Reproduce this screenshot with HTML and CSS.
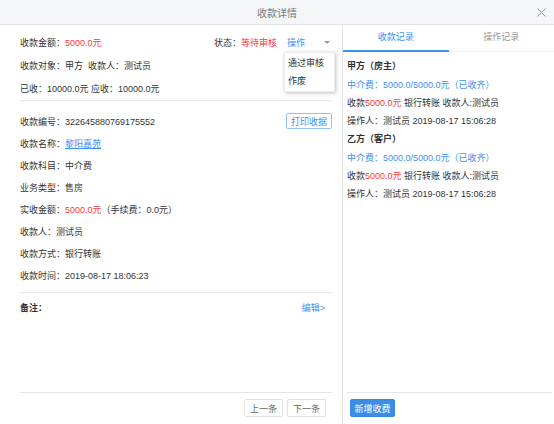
FILE: index.html
```html
<!DOCTYPE html>
<html lang="zh-CN">
<head>
    <meta charset="UTF-8">
    <title>收款详情</title>
    <link rel="stylesheet" href="styles.css">
</head>
<body>
    <div class="dialog">
        <div class="dialog-header">
            <span class="dialog-title">收款详情</span>
            <span class="close">
                <svg width="9" height="9" viewBox="0 0 9 9"><path d="M0.5 0.5L8.5 8.5M8.5 0.5L0.5 8.5" stroke="#999" stroke-width="1" fill="none"/></svg>
            </span>
        </div>
        <div class="dialog-body">
            <div class="main">
                <div class="section summary">
                    <div class="row split">
                        <span>收款金额：<span class="red">5000.0元</span></span>
                        <span class="status">
                            状态：<span class="red">等待审核</span>
                            <span class="op">
                                <span class="blue">操作</span>
                                <span class="caret"></span>
                                <span class="menu">
                                    <span class="menu-item">通过审核</span>
                                    <span class="menu-item">作废</span>
                                </span>
                            </span>
                        </span>
                    </div>
                    <div class="row">收款对象：甲方&nbsp;&nbsp;收款人：测试员</div>
                    <div class="row">已收：10000.0元 应收：10000.0元</div>
                </div>
                <div class="section details">
                    <div class="row split">
                        <span>收款编号：322645880769175552</span>
                        <button class="btn-outline">打印收据</button>
                    </div>
                    <div class="row">收款名称：<a class="link" href="#">黎阳嘉苑</a></div>
                    <div class="row">收款科目：中介费</div>
                    <div class="row">业务类型：售房</div>
                    <div class="row">实收金额：<span class="red">5000.0元</span>（手续费：0.0元）</div>
                    <div class="row">收款人：测试员</div>
                    <div class="row">收款方式：银行转账</div>
                    <div class="row">收款时间：2019-08-17 18:06:23</div>
                </div>
                <div class="remark">
                    <div class="row split">
                        <strong>备注：</strong>
                        <span class="blue">编辑&gt;</span>
                    </div>
                </div>
                <div class="main-footer">
                    <button class="btn">上一条</button>
                    <button class="btn">下一条</button>
                </div>
            </div>
            <div class="side">
                <div class="tabs">
                    <span class="tab active">收款记录</span>
                    <span class="tab">操作记录</span>
                </div>
                <div class="records">
                    <div class="record">
                        <div class="record-title">甲方（房主）</div>
                        <div class="record-fee">中介费：5000.0/5000.0元（已收齐）</div>
                        <div class="record-line">收款<span class="red">5000.0元</span> 银行转账 收款人:测试员</div>
                        <div class="record-line">操作人：测试员 2019-08-17 15:06:28</div>
                    </div>
                    <div class="record">
                        <div class="record-title">乙方（客户）</div>
                        <div class="record-fee">中介费：5000.0/5000.0元（已收齐）</div>
                        <div class="record-line">收款<span class="red">5000.0元</span> 银行转账 收款人:测试员</div>
                        <div class="record-line">操作人：测试员 2019-08-17 15:06:28</div>
                    </div>
                </div>
                <div class="side-footer">
                    <button class="btn-primary">新增收费</button>
                </div>
            </div>
        </div>
    </div>
</body>
</html>
```

FILE: styles.css
```css
body {
    margin: 0;
    font-family: "Liberation Sans", "Noto Sans CJK SC", sans-serif;
    font-size: 9px;
    color: #333;
    background-color: #fff;
}
.dialog {
    width: 554px;
    height: 424px;
    display: flex;
    flex-direction: column;
}
.dialog-header {
    height: 24px;
    border-bottom: 1px solid #e2e3e6;
    background-color: #f4f5f7;
    display: flex;
    align-items: center;
    justify-content: center;
    position: relative;
}
.dialog-title {
    font-size: 10px;
    color: #777;
}
.close {
    position: absolute;
    right: 8px;
    top: 8px;
    width: 9px;
    height: 9px;
}
.close svg {
    display: block;
}
.dialog-body {
    flex: 1;
    display: flex;
    min-height: 0;
}
.main {
    width: 312px;
    padding: 0 10px 0 20px;
    border-right: 1px solid #e4e4e4;
    display: flex;
    flex-direction: column;
}
.section {
    border-bottom: 1px solid #e6e6e6;
}
.summary {
    padding-top: 6px;
}
.summary .row {
    height: 23px;
}
.details {
    padding: 9px 0 6px;
}
.row {
    height: 22px;
    display: flex;
    align-items: center;
    white-space: nowrap;
}
.row.split {
    justify-content: space-between;
}
.red {
    color: #fd3636;
}
.blue {
    color: #3d8ff0;
}
.status {
    display: flex;
    align-items: center;
}
.op {
    position: relative;
    width: 45px;
    margin-left: 10px;
    display: flex;
    align-items: center;
    justify-content: space-between;
}
.caret {
    width: 0;
    height: 0;
    margin-right: 2px;
    border-left: 3px solid transparent;
    border-right: 3px solid transparent;
    border-top: 3px solid #999;
}
.menu {
    position: absolute;
    left: -3px;
    top: 16px;
    width: 49px;
    padding: 1px 0;
    background-color: #fff;
    border: 1px solid #ececec;
    box-shadow: 1px 1px 4px rgba(0,0,0,0.25);
    z-index: 2;
}
.menu-item {
    display: block;
    line-height: 18px;
    padding-left: 3px;
    color: #333;
}
.btn-outline {
    height: 16px;
    padding: 0 4px;
    font-family: inherit;
    font-size: 9px;
    color: #3d8ff0;
    background-color: #fff;
    border: 1px solid #91c2f5;
    border-radius: 2px;
}
.link {
    color: #3d8ff0;
    text-decoration: underline;
}
.remark {
    flex: 1;
    padding: 3px 7px 0 0;
}
.remark strong {
    font-weight: bold;
    color: #333;
}
.main-footer {
    height: 32px;
    border-top: 1px solid #e6e6e6;
    display: flex;
    justify-content: flex-end;
    align-items: flex-start;
    gap: 4px;
    padding: 6px 6px 0 0;
    box-sizing: border-box;
}
.btn {
    width: 39px;
    height: 18px;
    padding: 0;
    font-family: inherit;
    font-size: 9px;
    color: #666;
    background-color: #fff;
    border: 1px solid #e2e2e2;
    border-radius: 2px;
}
.side {
    flex: 1;
    display: flex;
    flex-direction: column;
}
.tabs {
    display: flex;
    height: 26px;
    border-bottom: 1px solid #f0f0f0;
}
.tab {
    flex: 1;
    text-align: center;
    line-height: 24px;
    color: #999;
}
.tab.active {
    color: #3d8ff0;
    border-bottom: 2px solid #3d8ff0;
    margin-bottom: -1px;
}
.records {
    flex: 1;
    padding: 5px 4px 0;
}
.record-title {
    font-weight: bold;
    line-height: 18px;
}
.record-fee {
    color: #3d8ff0;
    line-height: 18px;
    margin-top: 1px;
}
.record-line {
    line-height: 18px;
}
.side-footer {
    height: 32px;
    margin: 0 2px 0 4px;
    border-top: 1px solid #e6e6e6;
    padding: 6px 0 0 3px;
    box-sizing: border-box;
}
.btn-primary {
    width: 45px;
    height: 18px;
    padding: 0;
    font-family: inherit;
    font-size: 9px;
    color: #fff;
    background-color: #3a8ee8;
    border: 1px solid #3587e2;
    border-radius: 2px;
}
```
